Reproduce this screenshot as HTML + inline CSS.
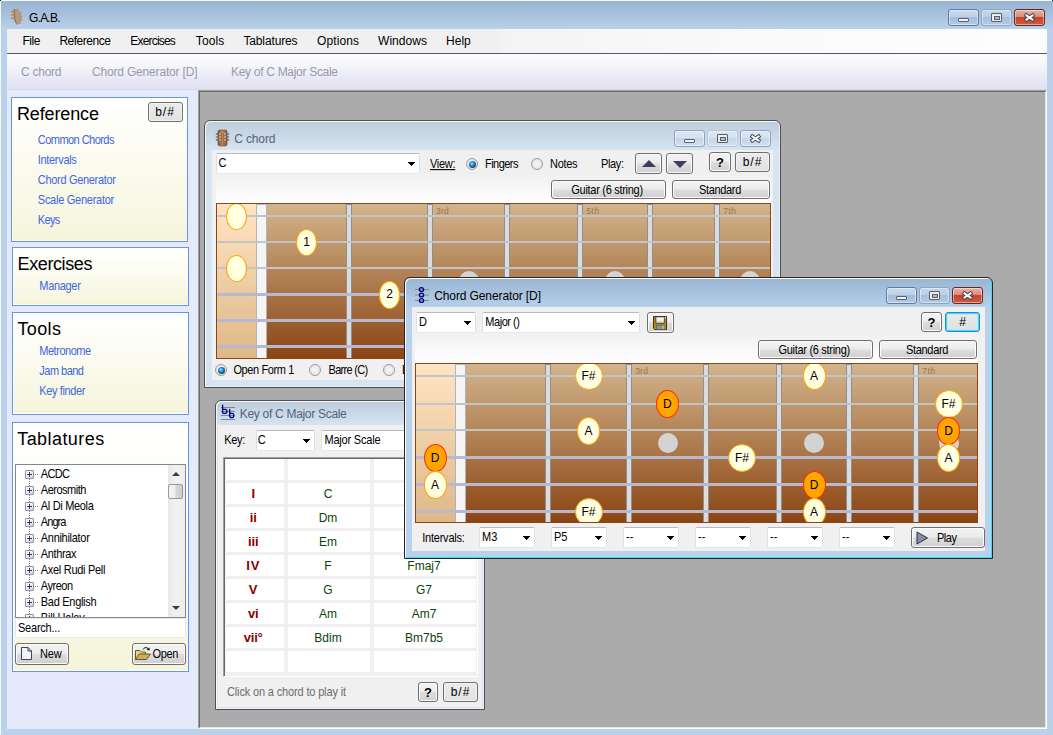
<!DOCTYPE html>
<html><head><meta charset="utf-8"><title>G.A.B.</title>
<style>
html,body{margin:0;padding:0}
body{width:1053px;height:735px;position:relative;overflow:hidden;background:#B9D1EA;font-family:"Liberation Sans",sans-serif;font-size:11px}
div,span.t,svg{position:absolute;box-sizing:border-box}
span.t{white-space:nowrap;display:block}
.btn{border:1px solid #707070;border-radius:3px;background:linear-gradient(#F3F3F3 0%,#ECECEC 48%,#DDDDDD 52%,#D0D0D0 100%);box-shadow:inset 0 0 0 1px #FBFBFB}
.combo{background:#fff;border:1px solid #E3E9EF;border-top-color:#B5BBC4;border-left-color:#DCE1E8;border-right-color:#DCE1E8;border-radius:2px}
.arrow{width:0;height:0;border-left:3.5px solid transparent;border-right:3.5px solid transparent;border-top:4px solid #000}
.panel{border:1px solid #6495ED;background:linear-gradient(#FFFFFF 0%,#FBFBF0 45%,#F5F5DC 100%);box-shadow:inset 1px -1px 0 #FFFFE6}
.radio{width:12px;height:12px;border-radius:50%;border:1px solid #9C9C9C;background:radial-gradient(circle at 50% 50%,#F7F7F7 0%,#ECECEC 50%,#D6D6D6 100%)}
.radio.on::after{content:"";position:absolute;left:1.5px;top:1.5px;width:7px;height:7px;border-radius:50%;background:radial-gradient(circle at 42% 38%,#9FE3FA 0%,#35AEE6 25%,#1F7DBE 42%,#1A4C7C 62%,#1A4C7C 100%)}
.mk{border-radius:50%;background:#FFFFE0;border:1.5px solid #FFA500}
.mk.root{background:#FFA500;border-color:#FF2A08}
.dot{border-radius:50%;background:#D3D3D3}
.fret{background:#DCDCDC;border-left:1px solid #8A9098;border-right:1px solid #8A9098;border-top:1px solid #8A9098}
.cell{background:#fff}

</style></head>
<body>
<div class="" style="left:0px;top:0px;width:1053px;height:735px;background:#B9D1EA"></div>
<div class="" style="left:1px;top:1px;width:1052px;height:28px;background:linear-gradient(#98B4D2 0%,#A9C3DF 55%,#B9D1EA 100%)"></div>
<div class="" style="left:0px;top:0px;width:1053px;height:1px;background:#F4F8FC"></div>
<div class="" style="left:0px;top:0px;width:1px;height:735px;background:#F4F8FC"></div>
<div class="" style="left:0px;top:0px;width:1px;height:1px;background:#222"></div>
<div class="" style="left:1052px;top:0px;width:1px;height:1px;background:#222"></div>
<svg style="left:10px;top:8px" width="14" height="18" viewBox="0 0 14 18">
<path d="M3.4 1.6 Q5.8 0.4 8.4 1.1 L10.2 3.6 L11.5 9 L11 13 L10.6 16 L6.4 16.4 L4.3 12.6 L3.6 7 Z" fill="#B39A86"/>
<path d="M3.4 1.6 L3.6 7 L4.3 12.6 L6.4 16.4 L7.2 16.3 L5.6 11.5 L5.1 5 L5.3 1 Z" fill="#927A6A"/>
<g fill="#C08A3C"><rect x="0.9" y="3" width="2.6" height="1.4"/><rect x="0.9" y="6.2" width="2.7" height="1.4"/><rect x="1.1" y="9.4" width="2.9" height="1.5"/>
<rect x="9.4" y="4.6" width="1.9" height="1.6"/><rect x="10.6" y="7.6" width="1.6" height="1.3"/><rect x="10.2" y="10.6" width="1.9" height="1.8"/></g>
<g fill="#C9964A"><rect x="4.9" y="3.2" width="0.9" height="1.5"/><rect x="5.2" y="6.6" width="0.9" height="1.3"/><rect x="5.7" y="9.8" width="1.1" height="1.4"/></g>
</svg>
<span id="t0" class="t " style="left:29px;top:10.84px;font-size:12px;line-height:14px;color:#000;letter-spacing:-0.769px;">G.A.B.</span>
<div class="" style="left:948px;top:9px;width:31px;height:17px;border:1px solid #5F7DA4;border-radius:3px;background:linear-gradient(#C7D9EC 0%,#BDD1E7 45%,#A3BCDA 50%,#B4CAE3 100%);box-shadow:inset 0 0 0 1px rgba(255,255,255,.45)"></div>
<div class="" style="left:958px;top:18px;width:11px;height:4px;background:#F2F2F2;border:1px solid #5A5F6B;border-radius:1px"></div>
<div class="" style="left:981px;top:9px;width:31px;height:17px;border:1px solid #8BA4C4;border-radius:3px;background:linear-gradient(#C3D6EA 0%,#BACFE6 45%,#A9C1DD 50%,#B3C9E2 100%);box-shadow:inset 0 0 0 1px rgba(255,255,255,.45)"></div>
<div class="" style="left:991px;top:13px;width:11px;height:9px;background:#EDEDED;border:1px solid #5A5F6B;border-radius:1px"></div>
<div class="" style="left:994.5px;top:16.5px;width:4px;height:2px;background:#A9BDD8;box-shadow:0 0 0 1px #5A5F6B"></div>
<div class="" style="left:1014px;top:9px;width:31px;height:17px;border:1px solid #5C2A2A;border-radius:3px;background:linear-gradient(#E9B2A6 0%,#DB8B7A 45%,#C5452B 50%,#CF5A3E 100%);box-shadow:inset 0 0 0 1px rgba(255,255,255,.45)"></div>
<svg style="left:1023px;top:12px" width="13" height="11" viewBox="0 0 13 11"><path d="M3.4 3.4 L9.6 7.6 M9.6 3.4 L3.4 7.6" fill="none" stroke="#3F4250" stroke-width="3.8" stroke-linecap="square"/><path d="M3.4 3.4 L9.6 7.6 M9.6 3.4 L3.4 7.6" fill="none" stroke="#F6F6F6" stroke-width="2.0" stroke-linecap="square"/></svg>
<div class="" style="left:7px;top:29px;width:1040px;height:24px;background:linear-gradient(90deg,#F0F0F0 0%,#F0F0F0 47%,#F4F4F4 48%,#FAFAFA 72%,#FDFDFD 100%)"></div>
<div class="" style="left:7px;top:53px;width:1040px;height:1px;background:#5A5A5A"></div>
<span id="t1" class="t " style="left:22.4px;top:33.94px;font-size:12px;line-height:14px;color:#000;letter-spacing:-0.448px;">File</span>
<span id="t2" class="t " style="left:59.4px;top:33.94px;font-size:12px;line-height:14px;color:#000;letter-spacing:-0.484px;">Reference</span>
<span id="t3" class="t " style="left:130.3px;top:33.94px;font-size:12px;line-height:14px;color:#000;letter-spacing:-0.814px;">Exercises</span>
<span id="t4" class="t " style="left:195.8px;top:33.94px;font-size:12px;line-height:14px;color:#000;letter-spacing:0.096px;">Tools</span>
<span id="t5" class="t " style="left:243.4px;top:33.94px;font-size:12px;line-height:14px;color:#000;letter-spacing:-0.131px;">Tablatures</span>
<span id="t6" class="t " style="left:317px;top:33.94px;font-size:12px;line-height:14px;color:#000;letter-spacing:0.107px;">Options</span>
<span id="t7" class="t " style="left:378px;top:33.94px;font-size:12px;line-height:14px;color:#000;letter-spacing:0.052px;">Windows</span>
<span id="t8" class="t " style="left:446px;top:33.94px;font-size:12px;line-height:14px;color:#000;letter-spacing:0.038px;">Help</span>
<div class="" style="left:7px;top:54px;width:1040px;height:36px;background:linear-gradient(#FCFCFE 0%,#F4F4FA 35%,#E7E7F4 75%,#E1E1F1 100%)"></div>
<div class="" style="left:7px;top:89px;width:1040px;height:1px;background:#D8D8E6"></div>
<span id="t9" class="t " style="left:21px;top:64.64px;font-size:12px;line-height:14px;color:#9999AE;letter-spacing:-0.255px;">C chord</span>
<span id="t10" class="t " style="left:92px;top:64.64px;font-size:12px;line-height:14px;color:#9999AE;letter-spacing:-0.179px;">Chord Generator [D]</span>
<span id="t11" class="t " style="left:231px;top:64.64px;font-size:12px;line-height:14px;color:#9999AE;letter-spacing:-0.301px;">Key of C Major Scale</span>
<div class="" style="left:7px;top:90px;width:191px;height:639px;background:#E5E9FC"></div>
<div class="panel" style="left:11px;top:97px;width:177px;height:145px;"></div>
<div class="panel" style="left:12px;top:247px;width:177px;height:59px;"></div>
<div class="panel" style="left:12px;top:312px;width:177px;height:103px;"></div>
<div class="panel" style="left:12px;top:422px;width:177px;height:250px;"></div>
<span id="t12" class="t " style="left:17px;top:103.56px;font-size:18px;line-height:20px;color:#000;letter-spacing:-0.133px;">Reference</span>
<div class="btn" style="left:148px;top:102px;width:35px;height:20px;background:linear-gradient(#EBEBEB,#E2E2E2);box-shadow:inset 0 0 0 1px #F3F3F3"></div>
<span class="t " style="left:165px;top:104.84px;font-size:12px;line-height:14px;color:#000;width:200px;margin-left:-100px;text-align:center;letter-spacing:1.006px;"><span id="t13">b/#</span></span>
<span id="t14" class="t " style="left:37.8px;top:134.49px;font-size:11px;line-height:13px;color:#4066E0;transform:scaleY(1.09);transform-origin:0 10.31px;letter-spacing:-0.545px;">Common Chords</span>
<span id="t15" class="t " style="left:37.8px;top:154.49px;font-size:11px;line-height:13px;color:#4066E0;transform:scaleY(1.09);transform-origin:0 10.31px;letter-spacing:-0.322px;">Intervals</span>
<span id="t16" class="t " style="left:37.8px;top:174.49px;font-size:11px;line-height:13px;color:#4066E0;transform:scaleY(1.09);transform-origin:0 10.31px;letter-spacing:-0.310px;">Chord Generator</span>
<span id="t17" class="t " style="left:37.8px;top:194.49px;font-size:11px;line-height:13px;color:#4066E0;transform:scaleY(1.09);transform-origin:0 10.31px;letter-spacing:-0.258px;">Scale Generator</span>
<span id="t18" class="t " style="left:37.8px;top:214.49px;font-size:11px;line-height:13px;color:#4066E0;transform:scaleY(1.09);transform-origin:0 10.31px;letter-spacing:-0.656px;">Keys</span>
<span id="t19" class="t " style="left:17.5px;top:254.26px;font-size:18px;line-height:20px;color:#000;letter-spacing:-0.379px;">Exercises</span>
<span id="t20" class="t " style="left:39.3px;top:279.69px;font-size:11px;line-height:13px;color:#4066E0;transform:scaleY(1.09);transform-origin:0 10.31px;letter-spacing:-0.320px;">Manager</span>
<span id="t21" class="t " style="left:17.5px;top:319.06px;font-size:18px;line-height:20px;color:#000;letter-spacing:0.367px;">Tools</span>
<span id="t22" class="t " style="left:39.3px;top:345.49px;font-size:11px;line-height:13px;color:#4066E0;transform:scaleY(1.09);transform-origin:0 10.31px;letter-spacing:-0.480px;">Metronome</span>
<span id="t23" class="t " style="left:39.3px;top:365.49px;font-size:11px;line-height:13px;color:#4066E0;transform:scaleY(1.09);transform-origin:0 10.31px;letter-spacing:-0.516px;">Jam band</span>
<span id="t24" class="t " style="left:39.3px;top:385.49px;font-size:11px;line-height:13px;color:#4066E0;transform:scaleY(1.09);transform-origin:0 10.31px;letter-spacing:-0.370px;">Key finder</span>
<span id="t25" class="t " style="left:17.2px;top:429.26px;font-size:18px;line-height:20px;color:#000;letter-spacing:0.438px;">Tablatures</span>
<div class="" style="left:15px;top:464px;width:171px;height:154px;background:#fff;border:1px solid #828790"></div>
<div style="left:16px;top:465px;width:169px;height:152px;overflow:hidden">
<div class="" style="left:13px;top:14px;width:1px;height:140px;background:repeating-linear-gradient(#808080 0,#808080 1px,transparent 1px,transparent 2px)"></div>
<div class="" style="left:9px;top:5px;width:9px;height:9px;border:1px solid #919191;border-radius:1px;background:linear-gradient(135deg,#fff,#D8D8D8)"></div>
<div class="" style="left:11px;top:9px;width:5px;height:1px;background:#27368F"></div>
<div class="" style="left:13px;top:7px;width:1px;height:5px;background:#27368F"></div>
<div class="" style="left:19px;top:9px;width:1px;height:1px;background:#808080"></div>
<div class="" style="left:21px;top:9px;width:1px;height:1px;background:#808080"></div>
<span id="t26" class="t " style="left:24.8px;top:2.69px;font-size:11px;line-height:13px;color:#000;transform:scaleY(1.09);transform-origin:0 10.31px;letter-spacing:-0.657px;">ACDC</span>
<div class="" style="left:9px;top:21px;width:9px;height:9px;border:1px solid #919191;border-radius:1px;background:linear-gradient(135deg,#fff,#D8D8D8)"></div>
<div class="" style="left:11px;top:25px;width:5px;height:1px;background:#27368F"></div>
<div class="" style="left:13px;top:23px;width:1px;height:5px;background:#27368F"></div>
<div class="" style="left:19px;top:25px;width:1px;height:1px;background:#808080"></div>
<div class="" style="left:21px;top:25px;width:1px;height:1px;background:#808080"></div>
<span id="t27" class="t " style="left:24.8px;top:18.69px;font-size:11px;line-height:13px;color:#000;transform:scaleY(1.09);transform-origin:0 10.31px;letter-spacing:-0.491px;">Aerosmith</span>
<div class="" style="left:9px;top:37px;width:9px;height:9px;border:1px solid #919191;border-radius:1px;background:linear-gradient(135deg,#fff,#D8D8D8)"></div>
<div class="" style="left:11px;top:41px;width:5px;height:1px;background:#27368F"></div>
<div class="" style="left:13px;top:39px;width:1px;height:5px;background:#27368F"></div>
<div class="" style="left:19px;top:41px;width:1px;height:1px;background:#808080"></div>
<div class="" style="left:21px;top:41px;width:1px;height:1px;background:#808080"></div>
<span id="t28" class="t " style="left:24.8px;top:34.69px;font-size:11px;line-height:13px;color:#000;transform:scaleY(1.09);transform-origin:0 10.31px;letter-spacing:-0.325px;">Al Di Meola</span>
<div class="" style="left:9px;top:53px;width:9px;height:9px;border:1px solid #919191;border-radius:1px;background:linear-gradient(135deg,#fff,#D8D8D8)"></div>
<div class="" style="left:11px;top:57px;width:5px;height:1px;background:#27368F"></div>
<div class="" style="left:13px;top:55px;width:1px;height:5px;background:#27368F"></div>
<div class="" style="left:19px;top:57px;width:1px;height:1px;background:#808080"></div>
<div class="" style="left:21px;top:57px;width:1px;height:1px;background:#808080"></div>
<span id="t29" class="t " style="left:24.8px;top:50.69px;font-size:11px;line-height:13px;color:#000;transform:scaleY(1.09);transform-origin:0 10.31px;letter-spacing:-0.915px;">Angra</span>
<div class="" style="left:9px;top:69px;width:9px;height:9px;border:1px solid #919191;border-radius:1px;background:linear-gradient(135deg,#fff,#D8D8D8)"></div>
<div class="" style="left:11px;top:73px;width:5px;height:1px;background:#27368F"></div>
<div class="" style="left:13px;top:71px;width:1px;height:5px;background:#27368F"></div>
<div class="" style="left:19px;top:73px;width:1px;height:1px;background:#808080"></div>
<div class="" style="left:21px;top:73px;width:1px;height:1px;background:#808080"></div>
<span id="t30" class="t " style="left:24.8px;top:66.69px;font-size:11px;line-height:13px;color:#000;transform:scaleY(1.09);transform-origin:0 10.31px;letter-spacing:-0.298px;">Annihilator</span>
<div class="" style="left:9px;top:85px;width:9px;height:9px;border:1px solid #919191;border-radius:1px;background:linear-gradient(135deg,#fff,#D8D8D8)"></div>
<div class="" style="left:11px;top:89px;width:5px;height:1px;background:#27368F"></div>
<div class="" style="left:13px;top:87px;width:1px;height:5px;background:#27368F"></div>
<div class="" style="left:19px;top:89px;width:1px;height:1px;background:#808080"></div>
<div class="" style="left:21px;top:89px;width:1px;height:1px;background:#808080"></div>
<span id="t31" class="t " style="left:24.8px;top:82.69px;font-size:11px;line-height:13px;color:#000;transform:scaleY(1.09);transform-origin:0 10.31px;letter-spacing:-0.354px;">Anthrax</span>
<div class="" style="left:9px;top:101px;width:9px;height:9px;border:1px solid #919191;border-radius:1px;background:linear-gradient(135deg,#fff,#D8D8D8)"></div>
<div class="" style="left:11px;top:105px;width:5px;height:1px;background:#27368F"></div>
<div class="" style="left:13px;top:103px;width:1px;height:5px;background:#27368F"></div>
<div class="" style="left:19px;top:105px;width:1px;height:1px;background:#808080"></div>
<div class="" style="left:21px;top:105px;width:1px;height:1px;background:#808080"></div>
<span id="t32" class="t " style="left:24.8px;top:98.69px;font-size:11px;line-height:13px;color:#000;transform:scaleY(1.09);transform-origin:0 10.31px;letter-spacing:-0.299px;">Axel Rudi Pell</span>
<div class="" style="left:9px;top:117px;width:9px;height:9px;border:1px solid #919191;border-radius:1px;background:linear-gradient(135deg,#fff,#D8D8D8)"></div>
<div class="" style="left:11px;top:121px;width:5px;height:1px;background:#27368F"></div>
<div class="" style="left:13px;top:119px;width:1px;height:5px;background:#27368F"></div>
<div class="" style="left:19px;top:121px;width:1px;height:1px;background:#808080"></div>
<div class="" style="left:21px;top:121px;width:1px;height:1px;background:#808080"></div>
<span id="t33" class="t " style="left:24.8px;top:114.69px;font-size:11px;line-height:13px;color:#000;transform:scaleY(1.09);transform-origin:0 10.31px;letter-spacing:-0.471px;">Ayreon</span>
<div class="" style="left:9px;top:133px;width:9px;height:9px;border:1px solid #919191;border-radius:1px;background:linear-gradient(135deg,#fff,#D8D8D8)"></div>
<div class="" style="left:11px;top:137px;width:5px;height:1px;background:#27368F"></div>
<div class="" style="left:13px;top:135px;width:1px;height:5px;background:#27368F"></div>
<div class="" style="left:19px;top:137px;width:1px;height:1px;background:#808080"></div>
<div class="" style="left:21px;top:137px;width:1px;height:1px;background:#808080"></div>
<span id="t34" class="t " style="left:24.8px;top:130.69px;font-size:11px;line-height:13px;color:#000;transform:scaleY(1.09);transform-origin:0 10.31px;letter-spacing:-0.292px;">Bad English</span>
<div class="" style="left:9px;top:149px;width:9px;height:9px;border:1px solid #919191;border-radius:1px;background:linear-gradient(135deg,#fff,#D8D8D8)"></div>
<div class="" style="left:11px;top:153px;width:5px;height:1px;background:#27368F"></div>
<div class="" style="left:13px;top:151px;width:1px;height:5px;background:#27368F"></div>
<div class="" style="left:19px;top:153px;width:1px;height:1px;background:#808080"></div>
<div class="" style="left:21px;top:153px;width:1px;height:1px;background:#808080"></div>
<span id="t35" class="t " style="left:24.8px;top:146.69px;font-size:11px;line-height:13px;color:#000;transform:scaleY(1.09);transform-origin:0 10.31px;letter-spacing:-0.207px;">Bill Haley</span>
<div class="" style="left:152px;top:0px;width:17px;height:152px;background:linear-gradient(90deg,#E8E8E8,#F2F2F2 50%,#EDEDED)"></div>
<div class="" style="left:152px;top:19px;width:15px;height:15px;border:1px solid #979797;border-radius:2px;background:linear-gradient(90deg,#F6F6F6 0%,#EDEDED 45%,#D6D6D6 55%,#CFCFCF 100%)"></div>
<div class="" style="left:156px;top:7px;width:0px;height:0px;border-left:4px solid transparent;border-right:4px solid transparent;border-bottom:4px solid #3C3C3C;width:0;height:0"></div>
<div class="" style="left:156px;top:141px;width:0px;height:0px;border-left:4px solid transparent;border-right:4px solid transparent;border-top:4px solid #3C3C3C;width:0;height:0"></div>
</div>
<div class="" style="left:15px;top:618px;width:171px;height:20px;background:#fff;border:1px solid #E3E9EF;border-radius:2px"></div>
<span id="t36" class="t " style="left:18px;top:621.69px;font-size:11px;line-height:13px;color:#000;transform:scaleY(1.09);transform-origin:0 10.31px;letter-spacing:-0.229px;">Search...</span>
<div class="btn" style="left:15px;top:643px;width:54px;height:22px;"></div>
<svg style="left:20px;top:646px" width="13" height="15" viewBox="0 0 13 15"><path d="M1.5 1.5 H8 L11.5 5 V13.5 H1.5 Z" fill="#F2F2FA" stroke="#3F3F5F" stroke-width="1"/><path d="M8 1.5 V5 H11.5" fill="none" stroke="#3F3F5F" stroke-width="1"/></svg>
<span id="t37" class="t " style="left:40.1px;top:647.69px;font-size:11px;line-height:13px;color:#000;transform:scaleY(1.09);transform-origin:0 10.31px;letter-spacing:-0.258px;">New</span>
<div class="btn" style="left:132px;top:643px;width:54px;height:22px;"></div>
<svg style="left:134px;top:646px" width="18" height="15" viewBox="0 0 18 15"><path d="M1.5 13.5 V4.5 H6 L7.5 6 H11.5 V8" fill="#E9D58A" stroke="#6B5A1E" stroke-width="1"/><path d="M1.5 13.5 L5 8 H16.5 L12.5 13.5 Z" fill="#C9B05A" stroke="#6B5A1E" stroke-width="1"/><path d="M9 3.5 C10.5 1 13.5 1 14.8 3.6" fill="none" stroke="#000" stroke-width="1"/><path d="M15.6 1.6 L15.4 4.6 L12.6 3.8 Z" fill="#000"/></svg>
<span id="t38" class="t " style="left:152.4px;top:647.69px;font-size:11px;line-height:13px;color:#000;transform:scaleY(1.09);transform-origin:0 10.31px;letter-spacing:-0.307px;">Open</span>
<div class="" style="left:198px;top:90px;width:849px;height:639px;background:#ABABAB;border-left:1px solid #A0A0A0;border-top:1px solid #A0A0A0;border-right:1px solid #fff;border-bottom:1px solid #fff"></div>
<div class="" style="left:199px;top:91px;width:847px;height:637px;border-left:1px solid #696969;border-top:1px solid #696969;border-right:1px solid #E3E3E3;border-bottom:1px solid #E3E3E3"></div>
<div class="" style="left:204px;top:120px;width:577px;height:268px;border:1px solid #4F4F4F;border-radius:6px 6px 0 0;background:linear-gradient(#BECCDB 0px,#D7E4F2 30px,#D7E4F2 100%);box-shadow:inset 1px 1px 0 #F6F9FD, inset -1px -1px 0 #E9F0F8"></div>
<div class="" style="left:212px;top:150px;width:561px;height:230px;background:#F0F0F0"></div>
<div class="" style="left:216px;top:150px;width:555px;height:53px;background:linear-gradient(#F0F0F0 0%,#F0F0F0 45%,#FFFFFF 100%)"></div>
<svg style="left:215px;top:129px" width="15" height="18" viewBox="0 0 15 18">
<defs><linearGradient id="hs" x1="0" y1="0" x2="1" y2="0"><stop offset="0" stop-color="#8A5632"/><stop offset="0.5" stop-color="#BE8A5E"/><stop offset="1" stop-color="#8A5632"/></linearGradient></defs>
<g fill="#8C857A"><rect x="0.8" y="4" width="2.4" height="1.9"/><rect x="0.8" y="7.2" width="2.4" height="1.6"/><rect x="0.8" y="10" width="2.4" height="1.8"/><rect x="11.8" y="4" width="2.4" height="1.9"/><rect x="11.8" y="7.2" width="2.4" height="1.6"/><rect x="11.8" y="10" width="2.4" height="1.8"/></g>
<path d="M3.9 1.1 H11.1 L12 2 V15.4 L11 16.9 H4 L3 15.4 V2 Z" fill="url(#hs)" stroke="#7C4C2A" stroke-width="0.7"/>
<path d="M6.3 4 L6.9 16 M8.7 4 L8.1 16" stroke="#7A5030" stroke-width="0.5" opacity="0.7"/>
<g fill="#A9BFCE" opacity="0.85"><rect x="4" y="3.8" width="1.7" height="2.3" rx="0.6"/><rect x="4" y="7" width="1.7" height="2" rx="0.6"/><rect x="4" y="10" width="1.7" height="2" rx="0.6"/><rect x="9.2" y="3.8" width="1.7" height="2.3" rx="0.6"/><rect x="9.2" y="7" width="1.7" height="2" rx="0.6"/><rect x="9.2" y="10" width="1.7" height="2" rx="0.6"/></g>
</svg>
<span id="t39" class="t " style="left:234.2px;top:131.74px;font-size:12px;line-height:14px;color:#56627E;letter-spacing:-0.122px;">C chord</span>
<div class="" style="left:674px;top:130px;width:31px;height:17px;border:1px solid #8DA2C0;border-radius:3px;background:linear-gradient(#DCE7F3 0%,#D5E1EF 45%,#C6D5E8 50%,#D2DFEE 100%);box-shadow:inset 0 0 0 1px rgba(255,255,255,.45)"></div>
<div class="" style="left:684px;top:139px;width:11px;height:4px;background:#F2F2F2;border:1px solid #5A5F6B;border-radius:1px"></div>
<div class="" style="left:707px;top:130px;width:31px;height:17px;border:1px solid #B4C3D8;border-radius:3px;background:linear-gradient(#DCE7F3 0%,#D5E1EF 45%,#C6D5E8 50%,#D2DFEE 100%);box-shadow:inset 0 0 0 1px rgba(255,255,255,.45)"></div>
<div class="" style="left:717px;top:134px;width:11px;height:9px;background:#EDEDED;border:1px solid #5A5F6B;border-radius:1px"></div>
<div class="" style="left:720.5px;top:137.5px;width:4px;height:2px;background:#A9BDD8;box-shadow:0 0 0 1px #5A5F6B"></div>
<div class="" style="left:740px;top:130px;width:31px;height:17px;border:1px solid #8DA2C0;border-radius:3px;background:linear-gradient(#DCE7F3 0%,#D5E1EF 45%,#C6D5E8 50%,#D2DFEE 100%);box-shadow:inset 0 0 0 1px rgba(255,255,255,.45)"></div>
<svg style="left:749px;top:133px" width="13" height="11" viewBox="0 0 13 11"><path d="M3.4 3.4 L9.6 7.6 M9.6 3.4 L3.4 7.6" fill="none" stroke="#3F4250" stroke-width="3.8" stroke-linecap="square"/><path d="M3.4 3.4 L9.6 7.6 M9.6 3.4 L3.4 7.6" fill="none" stroke="#F6F6F6" stroke-width="2.0" stroke-linecap="square"/></svg>
<div class="combo" style="left:216px;top:153px;width:204px;height:21px;"></div>
<div class="" style="left:408px;top:162px;width:7px;height:1px;background:#000"></div>
<div class="" style="left:409px;top:163px;width:5px;height:1px;background:#000"></div>
<div class="" style="left:410px;top:164px;width:3px;height:1px;background:#000"></div>
<div class="" style="left:411px;top:165px;width:1px;height:1px;background:#000"></div>
<span id="t40" class="t " style="left:218.6px;top:157.39px;font-size:11px;line-height:13px;color:#000;transform:scaleY(1.09);transform-origin:0 10.31px;">C</span>
<span id="t41" class="t " style="left:430px;top:157.99px;font-size:11px;line-height:13px;color:#000;transform:scaleY(1.09);transform-origin:0 10.31px;letter-spacing:-0.276px;text-decoration:underline;">View:</span>
<div class="radio on" style="left:466px;top:158px;width:12px;height:12px;"></div>
<span id="t42" class="t " style="left:485px;top:157.99px;font-size:11px;line-height:13px;color:#000;transform:scaleY(1.09);transform-origin:0 10.31px;letter-spacing:-0.531px;">Fingers</span>
<div class="radio" style="left:531px;top:158px;width:12px;height:12px;"></div>
<span id="t43" class="t " style="left:550px;top:157.99px;font-size:11px;line-height:13px;color:#000;transform:scaleY(1.09);transform-origin:0 10.31px;letter-spacing:-0.312px;">Notes</span>
<span id="t44" class="t " style="left:601px;top:157.99px;font-size:11px;line-height:13px;color:#000;transform:scaleY(1.09);transform-origin:0 10.31px;letter-spacing:-0.367px;">Play:</span>
<div class="btn" style="left:635px;top:153px;width:27px;height:21px;"></div>
<div class="" style="left:642px;top:160px;width:0px;height:0px;border-left:7px solid transparent;border-right:7px solid transparent;border-bottom:7px solid #3C3C5E;width:0;height:0"></div>
<div class="btn" style="left:666px;top:153px;width:27px;height:21px;"></div>
<div class="" style="left:673px;top:161px;width:0px;height:0px;border-left:7px solid transparent;border-right:7px solid transparent;border-top:7px solid #3C3C5E;width:0;height:0"></div>
<div class="btn" style="left:709px;top:152px;width:22px;height:20px;"></div>
<span class="t " style="left:720px;top:154.60px;font-size:13px;line-height:15px;color:#000;width:200px;margin-left:-100px;text-align:center;font-weight:bold;"><span id="t45">?</span></span>
<div class="btn" style="left:735px;top:152px;width:35px;height:20px;background:linear-gradient(#EBEBEB,#E2E2E2);box-shadow:inset 0 0 0 1px #F3F3F3"></div>
<span class="t " style="left:752.5px;top:155.04px;font-size:12px;line-height:14px;color:#000;width:200px;margin-left:-100px;text-align:center;letter-spacing:1.006px;"><span id="t46">b/#</span></span>
<div class="btn" style="left:551px;top:180px;width:115px;height:19px;"></div>
<span id="t47" class="t " style="left:571.3px;top:184.29px;font-size:11px;line-height:13px;color:#000;transform:scaleY(1.09);transform-origin:0 10.31px;letter-spacing:-0.289px;">Guitar (6 string)</span>
<div class="btn" style="left:672px;top:180px;width:98px;height:19px;"></div>
<span id="t48" class="t " style="left:699px;top:184.29px;font-size:11px;line-height:13px;color:#000;transform:scaleY(1.09);transform-origin:0 10.31px;letter-spacing:-0.337px;">Standard</span>
<div style="left:216px;top:203px;width:555px;height:156px;border:1px solid #8B4513;overflow:hidden;background:linear-gradient(#D2B48C,#8B4513)">
<div class="" style="left:0px;top:0px;width:39px;height:154px;background:linear-gradient(#FFE4C4,#DEB887)"></div>
<div class="" style="left:39px;top:0px;width:11px;height:154px;background:#F5F5F5;border-left:1px solid #AEB4BB;border-right:1px solid #AEB4BB;border-top:1px solid #B8BCC2"></div>
<div class="fret" style="left:129px;top:0px;width:6px;height:154px;"></div>
<div class="fret" style="left:210px;top:0px;width:6px;height:154px;"></div>
<div class="fret" style="left:287px;top:0px;width:6px;height:154px;"></div>
<div class="fret" style="left:360px;top:0px;width:6px;height:154px;"></div>
<div class="fret" style="left:430px;top:0px;width:6px;height:154px;"></div>
<div class="fret" style="left:497px;top:0px;width:6px;height:154px;"></div>
<span id="t49" class="t " style="left:219px;top:1.60px;font-size:8.5px;line-height:10px;color:#94784E;letter-spacing:0.202px;">3rd</span>
<span id="t50" class="t " style="left:369.2px;top:1.60px;font-size:8.5px;line-height:10px;color:#94784E;letter-spacing:0.436px;">5th</span>
<span id="t51" class="t " style="left:506.3px;top:1.60px;font-size:8.5px;line-height:10px;color:#94784E;letter-spacing:0.436px;">7th</span>
<div class="dot" style="left:241.6px;top:67px;width:20px;height:20px;"></div>
<div class="dot" style="left:388px;top:67px;width:20px;height:20px;"></div>
<div class="dot" style="left:522.7px;top:67px;width:20px;height:20px;"></div>
<div class="" style="left:0px;top:11px;width:553px;height:2px;background:#C3C4C6"></div>
<div class="" style="left:0px;top:37px;width:553px;height:2px;background:#C3C4C6"></div>
<div class="" style="left:0px;top:63px;width:553px;height:2px;background:#C3C4C6"></div>
<div class="" style="left:0px;top:89px;width:553px;height:3px;background:#BAB8D0"></div>
<div class="" style="left:0px;top:115px;width:553px;height:3px;background:#BAB8D0"></div>
<div class="" style="left:0px;top:141px;width:553px;height:3px;background:#BAB8D0"></div>
<div class="mk" style="left:8.9px;top:-1.1px;width:21.4px;height:27.2px;"></div>
<div class="mk" style="left:78.9px;top:24.9px;width:21.4px;height:27.2px;"></div>
<span class="t " style="left:89.6px;top:30.64px;font-size:12px;line-height:14px;color:#000;width:200px;margin-left:-100px;text-align:center;"><span id="t52">1</span></span>
<div class="mk" style="left:8.9px;top:50.9px;width:21.4px;height:27.2px;"></div>
<div class="mk" style="left:161.9px;top:77.4px;width:21.4px;height:27.2px;"></div>
<span class="t " style="left:172.6px;top:83.14px;font-size:12px;line-height:14px;color:#000;width:200px;margin-left:-100px;text-align:center;"><span id="t53">2</span></span>
<div class="mk" style="left:240.9px;top:103.4px;width:21.4px;height:27.2px;"></div>
<span class="t " style="left:251.6px;top:109.14px;font-size:12px;line-height:14px;color:#000;width:200px;margin-left:-100px;text-align:center;"><span id="t54">3</span></span>
</div>
<div class="radio on" style="left:215px;top:364px;width:12px;height:12px;"></div>
<span id="t55" class="t " style="left:233.4px;top:363.69px;font-size:11px;line-height:13px;color:#000;transform:scaleY(1.09);transform-origin:0 10.31px;letter-spacing:-0.381px;">Open Form 1</span>
<div class="radio" style="left:309px;top:364px;width:12px;height:12px;"></div>
<span id="t56" class="t " style="left:328.5px;top:363.69px;font-size:11px;line-height:13px;color:#000;transform:scaleY(1.09);transform-origin:0 10.31px;letter-spacing:-0.692px;">Barre (C)</span>
<div class="radio" style="left:383px;top:364px;width:12px;height:12px;"></div>
<span id="t57" class="t " style="left:402px;top:363.69px;font-size:11px;line-height:13px;color:#000;transform:scaleY(1.09);transform-origin:0 10.31px;letter-spacing:-0.616px;">Barre (A)</span>
<div class="" style="left:215px;top:400px;width:270px;height:310px;border:1px solid #4F4F4F;border-radius:6px 6px 0 0;background:linear-gradient(#BECCDB 0px,#D7E4F2 25px,#D7E4F2 100%);box-shadow:inset 1px 1px 0 #F6F9FD, inset -1px -1px 0 #E9F0F8"></div>
<div class="" style="left:218px;top:425px;width:264px;height:282px;background:#F0F0F0"></div>
<svg style="left:220px;top:404px" width="16" height="17" viewBox="0 0 16 17">
<path d="M1 3.5 H15 M1 7.5 H15 M1 11.5 H15 M1 15.5 H15" stroke="#7A7A78" stroke-width="0.9"/>
<g fill="none" stroke="#00008B" stroke-width="1.35" stroke-linecap="round" stroke-linejoin="round">
<path d="M2.6 1.2 V8.2 Q2.6 9.4 3.9 9.4 H5.4 Q6.8 9.4 6.8 8.1 V6.6 Q6.8 5.3 5.4 5.3 H2.8"/>
<path d="M9.7 5.4 V12.3 Q9.7 13.5 11 13.5 H12.3 Q13.7 13.5 13.7 12.2 V10.7 Q13.7 9.4 12.3 9.4 H9.9"/>
</g></svg>
<span id="t58" class="t " style="left:239.8px;top:406.84px;font-size:12px;line-height:14px;color:#56627E;letter-spacing:-0.301px;">Key of C Major Scale</span>
<span id="t59" class="t " style="left:224.3px;top:433.69px;font-size:11px;line-height:13px;color:#000;transform:scaleY(1.09);transform-origin:0 10.31px;letter-spacing:-0.339px;">Key:</span>
<div class="combo" style="left:256px;top:430px;width:59px;height:21px;"></div>
<div class="" style="left:303px;top:439px;width:7px;height:1px;background:#000"></div>
<div class="" style="left:304px;top:440px;width:5px;height:1px;background:#000"></div>
<div class="" style="left:305px;top:441px;width:3px;height:1px;background:#000"></div>
<div class="" style="left:306px;top:442px;width:1px;height:1px;background:#000"></div>
<span id="t60" class="t " style="left:257.8px;top:434.09px;font-size:11px;line-height:13px;color:#000;transform:scaleY(1.09);transform-origin:0 10.31px;">C</span>
<div class="combo" style="left:321px;top:430px;width:160px;height:21px;"></div>
<div class="" style="left:469px;top:439px;width:7px;height:1px;background:#000"></div>
<div class="" style="left:470px;top:440px;width:5px;height:1px;background:#000"></div>
<div class="" style="left:471px;top:441px;width:3px;height:1px;background:#000"></div>
<div class="" style="left:472px;top:442px;width:1px;height:1px;background:#000"></div>
<span id="t61" class="t " style="left:324.5px;top:434.09px;font-size:11px;line-height:13px;color:#000;transform:scaleY(1.09);transform-origin:0 10.31px;letter-spacing:-0.208px;">Major Scale</span>
<div class="" style="left:223px;top:457px;width:255px;height:220px;background:#F0F0F0;border:1px solid #A0A0A0;border-right-color:#FFFFFF;border-bottom-color:#FFFFFF;box-shadow:inset 1px 1px 0 #696969"></div>
<div class="cell" style="left:226px;top:459px;width:58px;height:21px;"></div>
<div class="cell" style="left:288px;top:459px;width:82px;height:21px;"></div>
<div class="cell" style="left:374px;top:459px;width:102px;height:21px;"></div>
<div class="cell" style="left:226px;top:483px;width:58px;height:21px;"></div>
<div class="cell" style="left:288px;top:483px;width:82px;height:21px;"></div>
<div class="cell" style="left:374px;top:483px;width:102px;height:21px;"></div>
<div class="cell" style="left:226px;top:507px;width:58px;height:21px;"></div>
<div class="cell" style="left:288px;top:507px;width:82px;height:21px;"></div>
<div class="cell" style="left:374px;top:507px;width:102px;height:21px;"></div>
<div class="cell" style="left:226px;top:531px;width:58px;height:21px;"></div>
<div class="cell" style="left:288px;top:531px;width:82px;height:21px;"></div>
<div class="cell" style="left:374px;top:531px;width:102px;height:21px;"></div>
<div class="cell" style="left:226px;top:555px;width:58px;height:21px;"></div>
<div class="cell" style="left:288px;top:555px;width:82px;height:21px;"></div>
<div class="cell" style="left:374px;top:555px;width:102px;height:21px;"></div>
<div class="cell" style="left:226px;top:579px;width:58px;height:21px;"></div>
<div class="cell" style="left:288px;top:579px;width:82px;height:21px;"></div>
<div class="cell" style="left:374px;top:579px;width:102px;height:21px;"></div>
<div class="cell" style="left:226px;top:603px;width:58px;height:21px;"></div>
<div class="cell" style="left:288px;top:603px;width:82px;height:21px;"></div>
<div class="cell" style="left:374px;top:603px;width:102px;height:21px;"></div>
<div class="cell" style="left:226px;top:627px;width:58px;height:21px;"></div>
<div class="cell" style="left:288px;top:627px;width:82px;height:21px;"></div>
<div class="cell" style="left:374px;top:627px;width:102px;height:21px;"></div>
<div class="cell" style="left:226px;top:651px;width:58px;height:21px;"></div>
<div class="cell" style="left:288px;top:651px;width:82px;height:21px;"></div>
<div class="cell" style="left:374px;top:651px;width:102px;height:21px;"></div>
<span class="t " style="left:253.2px;top:485.60px;font-size:13px;line-height:15px;color:#8B0000;width:200px;margin-left:-100px;text-align:center;font-weight:bold;"><span id="t62">I</span></span>
<span class="t " style="left:328px;top:487.44px;font-size:12px;line-height:14px;color:#0A450A;width:200px;margin-left:-100px;text-align:center;"><span id="t63">C</span></span>
<span class="t " style="left:424px;top:487.44px;font-size:12px;line-height:14px;color:#0A450A;width:200px;margin-left:-100px;text-align:center;"><span id="t64">Cmaj7</span></span>
<span class="t " style="left:253.2px;top:509.60px;font-size:13px;line-height:15px;color:#8B0000;width:200px;margin-left:-100px;text-align:center;letter-spacing:-0.234px;font-weight:bold;"><span id="t65">ii</span></span>
<span class="t " style="left:328px;top:511.44px;font-size:12px;line-height:14px;color:#0A450A;width:200px;margin-left:-100px;text-align:center;"><span id="t66">Dm</span></span>
<span class="t " style="left:424px;top:511.44px;font-size:12px;line-height:14px;color:#0A450A;width:200px;margin-left:-100px;text-align:center;"><span id="t67">Dm7</span></span>
<span class="t " style="left:253.2px;top:533.60px;font-size:13px;line-height:15px;color:#8B0000;width:200px;margin-left:-100px;text-align:center;letter-spacing:-0.172px;font-weight:bold;"><span id="t68">iii</span></span>
<span class="t " style="left:328px;top:535.44px;font-size:12px;line-height:14px;color:#0A450A;width:200px;margin-left:-100px;text-align:center;"><span id="t69">Em</span></span>
<span class="t " style="left:424px;top:535.44px;font-size:12px;line-height:14px;color:#0A450A;width:200px;margin-left:-100px;text-align:center;"><span id="t70">Em7</span></span>
<span class="t " style="left:253.2px;top:557.60px;font-size:13px;line-height:15px;color:#8B0000;width:200px;margin-left:-100px;text-align:center;letter-spacing:0.703px;font-weight:bold;"><span id="t71">IV</span></span>
<span class="t " style="left:328px;top:559.44px;font-size:12px;line-height:14px;color:#0A450A;width:200px;margin-left:-100px;text-align:center;"><span id="t72">F</span></span>
<span class="t " style="left:424px;top:559.44px;font-size:12px;line-height:14px;color:#0A450A;width:200px;margin-left:-100px;text-align:center;"><span id="t73">Fmaj7</span></span>
<span class="t " style="left:253.2px;top:581.60px;font-size:13px;line-height:15px;color:#8B0000;width:200px;margin-left:-100px;text-align:center;font-weight:bold;"><span id="t74">V</span></span>
<span class="t " style="left:328px;top:583.44px;font-size:12px;line-height:14px;color:#0A450A;width:200px;margin-left:-100px;text-align:center;"><span id="t75">G</span></span>
<span class="t " style="left:424px;top:583.44px;font-size:12px;line-height:14px;color:#0A450A;width:200px;margin-left:-100px;text-align:center;"><span id="t76">G7</span></span>
<span class="t " style="left:253.2px;top:605.60px;font-size:13px;line-height:15px;color:#8B0000;width:200px;margin-left:-100px;text-align:center;letter-spacing:-0.344px;font-weight:bold;"><span id="t77">vi</span></span>
<span class="t " style="left:328px;top:607.44px;font-size:12px;line-height:14px;color:#0A450A;width:200px;margin-left:-100px;text-align:center;"><span id="t78">Am</span></span>
<span class="t " style="left:424px;top:607.44px;font-size:12px;line-height:14px;color:#0A450A;width:200px;margin-left:-100px;text-align:center;"><span id="t79">Am7</span></span>
<span class="t " style="left:253.2px;top:629.60px;font-size:13px;line-height:15px;color:#8B0000;width:200px;margin-left:-100px;text-align:center;letter-spacing:-0.219px;font-weight:bold;"><span id="t80">vii°</span></span>
<span class="t " style="left:328px;top:631.44px;font-size:12px;line-height:14px;color:#0A450A;width:200px;margin-left:-100px;text-align:center;"><span id="t81">Bdim</span></span>
<span class="t " style="left:424px;top:631.44px;font-size:12px;line-height:14px;color:#0A450A;width:200px;margin-left:-100px;text-align:center;"><span id="t82">Bm7b5</span></span>
<span id="t83" class="t " style="left:227px;top:686.09px;font-size:11px;line-height:13px;color:#6E6E6E;transform:scaleY(1.09);transform-origin:0 10.31px;letter-spacing:-0.150px;">Click on a chord to play it</span>
<div class="btn" style="left:418px;top:682px;width:20px;height:20px;"></div>
<span class="t " style="left:428px;top:684.60px;font-size:13px;line-height:15px;color:#000;width:200px;margin-left:-100px;text-align:center;font-weight:bold;"><span id="t84">?</span></span>
<div class="btn" style="left:443px;top:682px;width:35px;height:20px;background:linear-gradient(#EBEBEB,#E2E2E2);box-shadow:inset 0 0 0 1px #F3F3F3"></div>
<span class="t " style="left:460.5px;top:685.04px;font-size:12px;line-height:14px;color:#000;width:200px;margin-left:-100px;text-align:center;letter-spacing:1.006px;"><span id="t85">b/#</span></span>
<div class="" style="left:404px;top:277px;width:589px;height:282px;border:1px solid #262626;border-radius:6px 6px 0 0;background:linear-gradient(#98B4D2 0px,#B9D1EA 30px,#B9D1EA 100%);box-shadow:inset 1px 1px 0 #FFFFFF, inset -1px -1px 0 #3FD9FA"></div>
<div class="" style="left:412px;top:307px;width:573px;height:244px;background:#F0F0F0"></div>
<div class="" style="left:415px;top:307px;width:563px;height:56px;background:linear-gradient(#F0F0F0 0%,#F0F0F0 45%,#FFFFFF 100%)"></div>
<svg style="left:414px;top:286px" width="16" height="18" viewBox="0 0 16 18">
<path d="M1 3.5 H15 M1 9 H15 M1 14.5 H15" stroke="#8C8678" stroke-width="1"/>
<g fill="none" stroke="#00008B" stroke-width="1.3"><ellipse cx="7.5" cy="3.5" rx="2.1" ry="1.95"/><ellipse cx="7.5" cy="9" rx="2.1" ry="1.95"/><ellipse cx="7.5" cy="14.5" rx="2.1" ry="1.95"/></g>
</svg>
<span id="t86" class="t " style="left:434.2px;top:288.74px;font-size:12px;line-height:14px;color:#000;letter-spacing:-0.107px;">Chord Generator [D]</span>
<div class="" style="left:886px;top:287px;width:31px;height:17px;border:1px solid #5F7DA4;border-radius:3px;background:linear-gradient(#C7D9EC 0%,#BDD1E7 45%,#A3BCDA 50%,#B4CAE3 100%);box-shadow:inset 0 0 0 1px rgba(255,255,255,.45)"></div>
<div class="" style="left:896px;top:296px;width:11px;height:4px;background:#F2F2F2;border:1px solid #5A5F6B;border-radius:1px"></div>
<div class="" style="left:919px;top:287px;width:31px;height:17px;border:1px solid #8BA4C4;border-radius:3px;background:linear-gradient(#C3D6EA 0%,#BACFE6 45%,#A9C1DD 50%,#B3C9E2 100%);box-shadow:inset 0 0 0 1px rgba(255,255,255,.45)"></div>
<div class="" style="left:929px;top:291px;width:11px;height:9px;background:#EDEDED;border:1px solid #5A5F6B;border-radius:1px"></div>
<div class="" style="left:932.5px;top:294.5px;width:4px;height:2px;background:#A9BDD8;box-shadow:0 0 0 1px #5A5F6B"></div>
<div class="" style="left:952px;top:287px;width:31px;height:17px;border:1px solid #5C2A2A;border-radius:3px;background:linear-gradient(#E9B2A6 0%,#DB8B7A 45%,#C5452B 50%,#CF5A3E 100%);box-shadow:inset 0 0 0 1px rgba(255,255,255,.45)"></div>
<svg style="left:961px;top:290px" width="13" height="11" viewBox="0 0 13 11"><path d="M3.4 3.4 L9.6 7.6 M9.6 3.4 L3.4 7.6" fill="none" stroke="#3F4250" stroke-width="3.8" stroke-linecap="square"/><path d="M3.4 3.4 L9.6 7.6 M9.6 3.4 L3.4 7.6" fill="none" stroke="#F6F6F6" stroke-width="2.0" stroke-linecap="square"/></svg>
<div class="combo" style="left:416px;top:312px;width:60px;height:21px;"></div>
<div class="" style="left:464px;top:321px;width:7px;height:1px;background:#000"></div>
<div class="" style="left:465px;top:322px;width:5px;height:1px;background:#000"></div>
<div class="" style="left:466px;top:323px;width:3px;height:1px;background:#000"></div>
<div class="" style="left:467px;top:324px;width:1px;height:1px;background:#000"></div>
<span id="t87" class="t " style="left:419px;top:316.29px;font-size:11px;line-height:13px;color:#000;transform:scaleY(1.09);transform-origin:0 10.31px;">D</span>
<div class="combo" style="left:482px;top:312px;width:158px;height:21px;"></div>
<div class="" style="left:628px;top:321px;width:7px;height:1px;background:#000"></div>
<div class="" style="left:629px;top:322px;width:5px;height:1px;background:#000"></div>
<div class="" style="left:630px;top:323px;width:3px;height:1px;background:#000"></div>
<div class="" style="left:631px;top:324px;width:1px;height:1px;background:#000"></div>
<span id="t88" class="t " style="left:485.3px;top:316.29px;font-size:11px;line-height:13px;color:#000;transform:scaleY(1.09);transform-origin:0 10.31px;letter-spacing:-0.456px;">Major ()</span>
<div class="btn" style="left:647px;top:312px;width:27px;height:21px;"></div>
<svg style="left:653px;top:316px" width="14" height="14" viewBox="0 0 14 14">
<defs><linearGradient id="fl" x1="0" y1="0" x2="1" y2="0"><stop offset="0" stop-color="#B38E14"/><stop offset="0.55" stop-color="#A38A22"/><stop offset="1" stop-color="#A69A58"/></linearGradient>
<linearGradient id="fw" x1="0" y1="0" x2="0" y2="1"><stop offset="0" stop-color="#FFFFFF"/><stop offset="1" stop-color="#D6D6D6"/></linearGradient></defs>
<path d="M0.5 0.5 H13.5 V13.5 H1.6 L0.5 12.4 Z" fill="url(#fl)" stroke="#4A2E08" stroke-width="1"/>
<rect x="2.9" y="0.9" width="8.4" height="6.3" fill="url(#fw)" stroke="#4A2E08" stroke-width="0.8"/>
<rect x="11.8" y="1.1" width="1.1" height="1.1" fill="#FFFFFF"/>
<rect x="3.3" y="9.2" width="8.6" height="4.1" fill="#8E8E98" stroke="#5C5C66" stroke-width="0.6"/>
<rect x="9" y="9.8" width="2.2" height="3" fill="#C9B562"/>
</svg>
<div class="btn" style="left:921px;top:312px;width:21px;height:20px;"></div>
<span class="t " style="left:931.5px;top:314.60px;font-size:13px;line-height:15px;color:#000;width:200px;margin-left:-100px;text-align:center;font-weight:bold;"><span id="t89">?</span></span>
<div class="btn" style="left:945px;top:312px;width:35px;height:20px;border-color:#2C87C8;box-shadow:inset 0 0 0 1px #42D6FA, inset 0 0 0 2px #B8ECFB;background:linear-gradient(#EAEAEA,#E0E0E0)"></div>
<span class="t " style="left:962.5px;top:315.04px;font-size:12px;line-height:14px;color:#000;width:200px;margin-left:-100px;text-align:center;"><span id="t90">#</span></span>
<div class="btn" style="left:758px;top:340px;width:115px;height:19px;"></div>
<span id="t91" class="t " style="left:778.4px;top:344.29px;font-size:11px;line-height:13px;color:#000;transform:scaleY(1.09);transform-origin:0 10.31px;letter-spacing:-0.289px;">Guitar (6 string)</span>
<div class="btn" style="left:879px;top:340px;width:98px;height:19px;"></div>
<span id="t92" class="t " style="left:906.1px;top:344.29px;font-size:11px;line-height:13px;color:#000;transform:scaleY(1.09);transform-origin:0 10.31px;letter-spacing:-0.337px;">Standard</span>
<div style="left:415px;top:363px;width:563px;height:160px;border:1px solid #8B4513;overflow:hidden;background:linear-gradient(#D2B48C,#8B4513)">
<div class="" style="left:0px;top:0px;width:39px;height:158px;background:linear-gradient(#FFE4C4,#DEB887)"></div>
<div class="" style="left:39px;top:0px;width:11px;height:158px;background:#F5F5F5;border-left:1px solid #AEB4BB;border-right:1px solid #AEB4BB;border-top:1px solid #B8BCC2"></div>
<div class="fret" style="left:129px;top:0px;width:6px;height:158px;"></div>
<div class="fret" style="left:210px;top:0px;width:6px;height:158px;"></div>
<div class="fret" style="left:287px;top:0px;width:6px;height:158px;"></div>
<div class="fret" style="left:360px;top:0px;width:6px;height:158px;"></div>
<div class="fret" style="left:430px;top:0px;width:6px;height:158px;"></div>
<div class="fret" style="left:497px;top:0px;width:6px;height:158px;"></div>
<span id="t93" class="t " style="left:219.2px;top:1.50px;font-size:8.5px;line-height:10px;color:#94784E;letter-spacing:0.202px;">3rd</span>
<span id="t94" class="t " style="left:506.3px;top:1.50px;font-size:8.5px;line-height:10px;color:#94784E;letter-spacing:0.436px;">7th</span>
<div class="dot" style="left:241.5px;top:69.1px;width:20px;height:20px;"></div>
<div class="dot" style="left:388px;top:69.1px;width:20px;height:20px;"></div>
<div class="dot" style="left:522.5px;top:69.1px;width:20px;height:20px;"></div>
<div class="" style="left:0px;top:11px;width:561px;height:2px;background:#C3C4C6"></div>
<div class="" style="left:0px;top:39px;width:561px;height:2px;background:#C3C4C6"></div>
<div class="" style="left:0px;top:65px;width:561px;height:2px;background:#C3C4C6"></div>
<div class="" style="left:0px;top:92px;width:561px;height:3px;background:#BAB8D0"></div>
<div class="" style="left:0px;top:119px;width:561px;height:3px;background:#BAB8D0"></div>
<div class="" style="left:0px;top:146px;width:561px;height:3px;background:#BAB8D0"></div>
<div class="mk" style="left:158.5px;top:-2px;width:28px;height:28px;"></div>
<span class="t " style="left:172.5px;top:5.14px;font-size:12px;line-height:14px;color:#000;width:200px;margin-left:-100px;text-align:center;"><span id="t95">F#</span></span>
<div class="mk" style="left:386.5px;top:-2px;width:23px;height:28px;"></div>
<span class="t " style="left:398px;top:5.14px;font-size:12px;line-height:14px;color:#000;width:200px;margin-left:-100px;text-align:center;"><span id="t96">A</span></span>
<div class="mk root" style="left:239.9px;top:26px;width:23px;height:28px;"></div>
<span class="t " style="left:251.4px;top:33.14px;font-size:12px;line-height:14px;color:#000;width:200px;margin-left:-100px;text-align:center;"><span id="t97">D</span></span>
<div class="mk" style="left:518.5px;top:26px;width:28px;height:28px;"></div>
<span class="t " style="left:532.5px;top:33.14px;font-size:12px;line-height:14px;color:#000;width:200px;margin-left:-100px;text-align:center;"><span id="t98">F#</span></span>
<div class="mk" style="left:161px;top:52.5px;width:23px;height:28px;"></div>
<span class="t " style="left:172.5px;top:59.64px;font-size:12px;line-height:14px;color:#000;width:200px;margin-left:-100px;text-align:center;"><span id="t99">A</span></span>
<div class="mk root" style="left:521px;top:52.5px;width:23px;height:28px;"></div>
<span class="t " style="left:532.5px;top:59.64px;font-size:12px;line-height:14px;color:#000;width:200px;margin-left:-100px;text-align:center;"><span id="t100">D</span></span>
<div class="mk root" style="left:7.5px;top:79.5px;width:23px;height:28px;"></div>
<span class="t " style="left:19px;top:86.64px;font-size:12px;line-height:14px;color:#000;width:200px;margin-left:-100px;text-align:center;"><span id="t101">D</span></span>
<div class="mk" style="left:312px;top:79.5px;width:28px;height:28px;"></div>
<span class="t " style="left:326px;top:86.64px;font-size:12px;line-height:14px;color:#000;width:200px;margin-left:-100px;text-align:center;"><span id="t102">F#</span></span>
<div class="mk" style="left:521px;top:79.5px;width:23px;height:28px;"></div>
<span class="t " style="left:532.5px;top:86.64px;font-size:12px;line-height:14px;color:#000;width:200px;margin-left:-100px;text-align:center;"><span id="t103">A</span></span>
<div class="mk" style="left:7.5px;top:106.5px;width:23px;height:28px;"></div>
<span class="t " style="left:19px;top:113.64px;font-size:12px;line-height:14px;color:#000;width:200px;margin-left:-100px;text-align:center;"><span id="t104">A</span></span>
<div class="mk root" style="left:386.5px;top:106.5px;width:23px;height:28px;"></div>
<span class="t " style="left:398px;top:113.64px;font-size:12px;line-height:14px;color:#000;width:200px;margin-left:-100px;text-align:center;"><span id="t105">D</span></span>
<div class="mk" style="left:158.5px;top:133.5px;width:28px;height:28px;"></div>
<span class="t " style="left:172.5px;top:140.64px;font-size:12px;line-height:14px;color:#000;width:200px;margin-left:-100px;text-align:center;"><span id="t106">F#</span></span>
<div class="mk" style="left:386.5px;top:133.5px;width:23px;height:28px;"></div>
<span class="t " style="left:398px;top:140.64px;font-size:12px;line-height:14px;color:#000;width:200px;margin-left:-100px;text-align:center;"><span id="t107">A</span></span>
</div>
<span id="t108" class="t " style="left:422.3px;top:531.69px;font-size:11px;line-height:13px;color:#000;transform:scaleY(1.09);transform-origin:0 10.31px;letter-spacing:-0.238px;">Intervals:</span>
<div class="combo" style="left:479px;top:527px;width:56px;height:21px;"></div>
<div class="" style="left:523px;top:536px;width:7px;height:1px;background:#000"></div>
<div class="" style="left:524px;top:537px;width:5px;height:1px;background:#000"></div>
<div class="" style="left:525px;top:538px;width:3px;height:1px;background:#000"></div>
<div class="" style="left:526px;top:539px;width:1px;height:1px;background:#000"></div>
<span id="t109" class="t " style="left:482px;top:530.69px;font-size:11px;line-height:13px;color:#000;transform:scaleY(1.09);transform-origin:0 10.31px;">M3</span>
<div class="combo" style="left:551px;top:527px;width:56px;height:21px;"></div>
<div class="" style="left:595px;top:536px;width:7px;height:1px;background:#000"></div>
<div class="" style="left:596px;top:537px;width:5px;height:1px;background:#000"></div>
<div class="" style="left:597px;top:538px;width:3px;height:1px;background:#000"></div>
<div class="" style="left:598px;top:539px;width:1px;height:1px;background:#000"></div>
<span id="t110" class="t " style="left:554px;top:530.69px;font-size:11px;line-height:13px;color:#000;transform:scaleY(1.09);transform-origin:0 10.31px;">P5</span>
<div class="combo" style="left:623px;top:527px;width:56px;height:21px;"></div>
<div class="" style="left:667px;top:536px;width:7px;height:1px;background:#000"></div>
<div class="" style="left:668px;top:537px;width:5px;height:1px;background:#000"></div>
<div class="" style="left:669px;top:538px;width:3px;height:1px;background:#000"></div>
<div class="" style="left:670px;top:539px;width:1px;height:1px;background:#000"></div>
<span id="t111" class="t " style="left:626px;top:530.69px;font-size:11px;line-height:13px;color:#000;transform:scaleY(1.09);transform-origin:0 10.31px;">--</span>
<div class="combo" style="left:695px;top:527px;width:56px;height:21px;"></div>
<div class="" style="left:739px;top:536px;width:7px;height:1px;background:#000"></div>
<div class="" style="left:740px;top:537px;width:5px;height:1px;background:#000"></div>
<div class="" style="left:741px;top:538px;width:3px;height:1px;background:#000"></div>
<div class="" style="left:742px;top:539px;width:1px;height:1px;background:#000"></div>
<span id="t112" class="t " style="left:698px;top:530.69px;font-size:11px;line-height:13px;color:#000;transform:scaleY(1.09);transform-origin:0 10.31px;">--</span>
<div class="combo" style="left:767px;top:527px;width:56px;height:21px;"></div>
<div class="" style="left:811px;top:536px;width:7px;height:1px;background:#000"></div>
<div class="" style="left:812px;top:537px;width:5px;height:1px;background:#000"></div>
<div class="" style="left:813px;top:538px;width:3px;height:1px;background:#000"></div>
<div class="" style="left:814px;top:539px;width:1px;height:1px;background:#000"></div>
<span id="t113" class="t " style="left:770px;top:530.69px;font-size:11px;line-height:13px;color:#000;transform:scaleY(1.09);transform-origin:0 10.31px;">--</span>
<div class="combo" style="left:839px;top:527px;width:56px;height:21px;"></div>
<div class="" style="left:883px;top:536px;width:7px;height:1px;background:#000"></div>
<div class="" style="left:884px;top:537px;width:5px;height:1px;background:#000"></div>
<div class="" style="left:885px;top:538px;width:3px;height:1px;background:#000"></div>
<div class="" style="left:886px;top:539px;width:1px;height:1px;background:#000"></div>
<span id="t114" class="t " style="left:842px;top:530.69px;font-size:11px;line-height:13px;color:#000;transform:scaleY(1.09);transform-origin:0 10.31px;">--</span>
<div class="btn" style="left:911px;top:527px;width:74px;height:21px;"></div>
<svg style="left:916px;top:531px" width="13" height="14" viewBox="0 0 13 14"><path d="M1 1 L11.5 7 L1 13 Z" fill="#8A8DA8" stroke="#2E2E3E" stroke-width="1"/></svg>
<span id="t115" class="t " style="left:937px;top:531.79px;font-size:11px;line-height:13px;color:#000;transform:scaleY(1.09);transform-origin:0 10.31px;letter-spacing:-0.469px;">Play</span>
</body></html>
